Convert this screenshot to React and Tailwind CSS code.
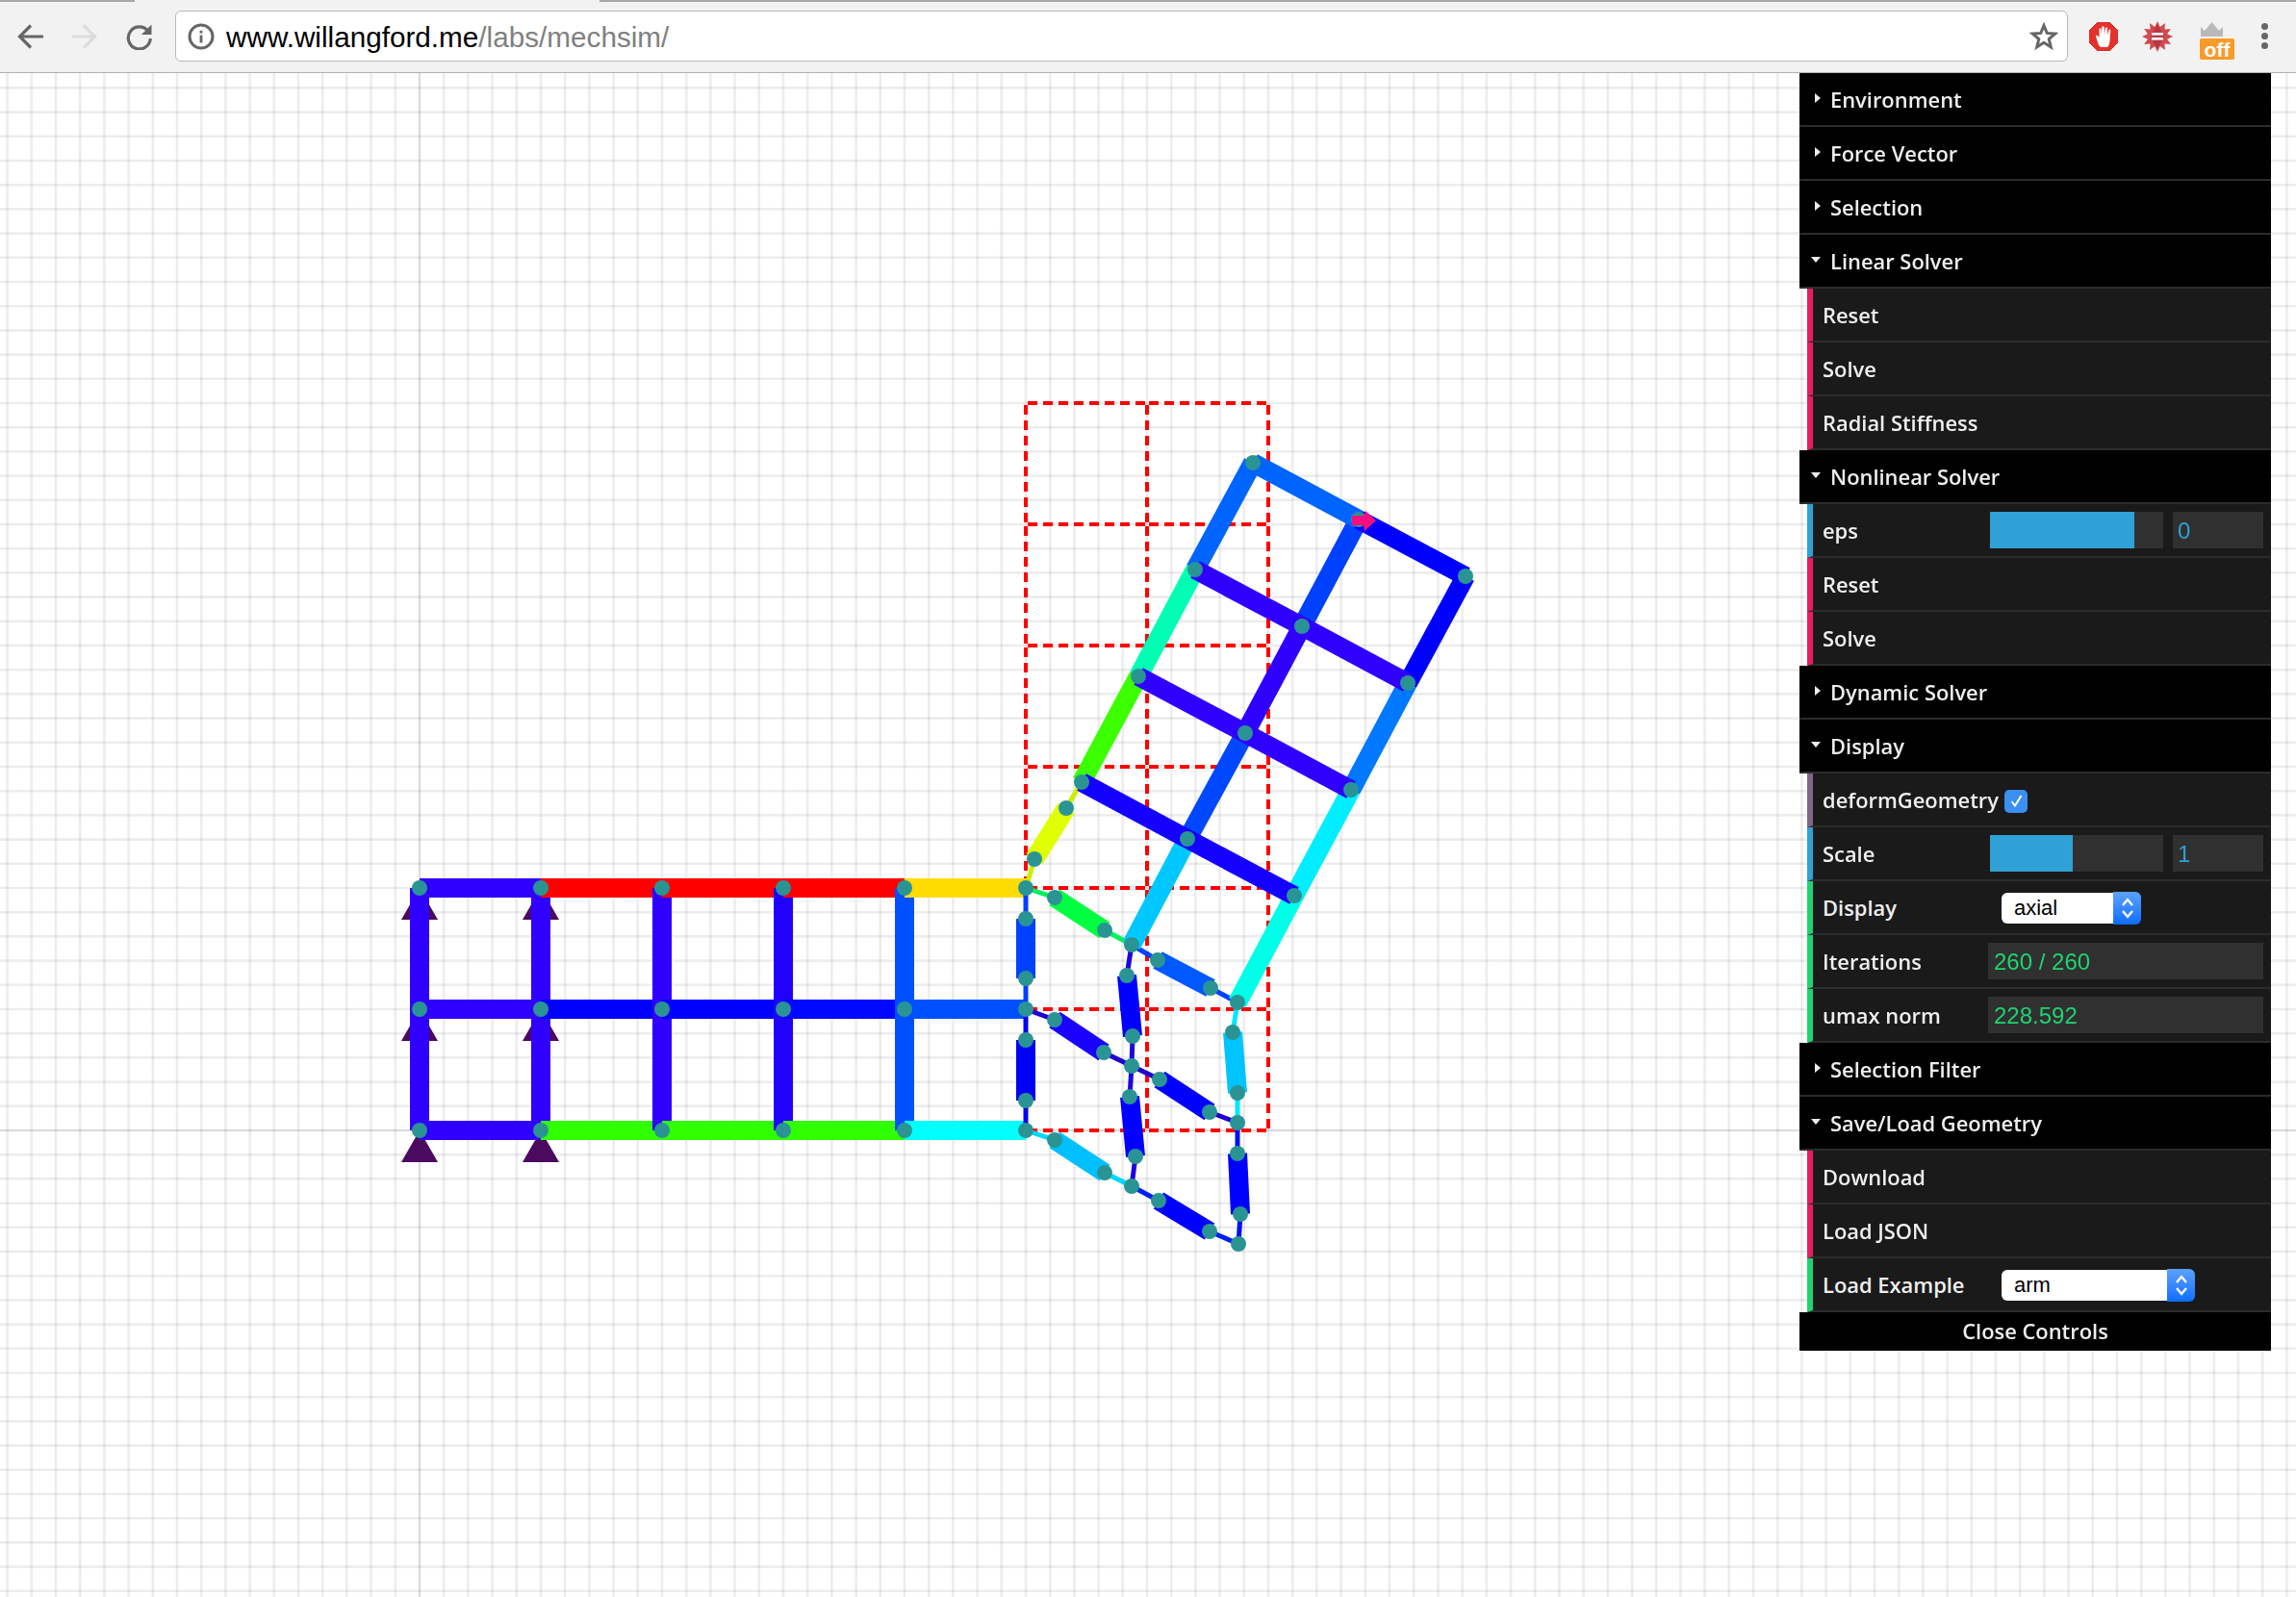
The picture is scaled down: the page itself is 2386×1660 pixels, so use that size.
import React from "react";

const gridX = Array.from({ length: 95 }, (_, i) => 436 + (i - 17) * 25.2);
const gridY = Array.from({ length: 63 }, (_, i) => 1175 + (i - 43) * 25.2);

const n = {
  a: [1302, 481], b: [1412, 540], c: [1523, 599],
  d: [1242, 592], e: [1353, 651], f: [1463, 710],
  g: [1183, 703], h: [1294, 762], i: [1404, 821],
  j: [1124, 813], k: [1234, 872], l: [1345, 931],
  m: [1176, 982], o: [1286, 1042], p: [1176, 1108], q: [1286, 1167],
  r: [1176, 1233], s: [1287, 1293],
  t: [1066, 923], u: [1066, 1049], v: [1066, 1175],
};

const xs = [436, 562, 688, 814, 940, 1066];
const ys = [923, 1049, 1175];
const rowColors = [
  ["#3000ff", "#ff0000", "#ff0000", "#ff0000", "#ffdc00"],
  ["#3000ff", "#0000ff", "#0000ff", "#0008ff", "#0050ff"],
  ["#3000ff", "#30ff00", "#30ff00", "#30ff00", "#00ffff"],
];
const colColors = ["#3000ff", "#3000ff", "#3000ff", "#2000ff", "#0050ff"];

const undeformed = [];
for (let c = 0; c < 5; c++) {
  undeformed.push({ x1: xs[c], y1: ys[0], x2: xs[c], y2: ys[1], color: colColors[c] });
  undeformed.push({ x1: xs[c], y1: ys[1], x2: xs[c], y2: ys[2], color: colColors[c] });
  ys.forEach((y, r) => undeformed.push({ x1: xs[c], y1: y, x2: xs[c + 1], y2: y, color: rowColors[r][c] }));
}

const thick = [
  [n.a, n.d, "#0064ff"], [n.d, n.g, "#00ffb4"], [n.g, n.j, "#3cff00"],
  [n.b, n.e, "#0040ff"], [n.e, n.h, "#3000ff"], [n.h, n.k, "#0048ff"], [n.k, n.m, "#00c8ff"],
  [n.c, n.f, "#0000ff"], [n.f, n.i, "#0078ff"], [n.i, n.l, "#00eeff"], [n.l, n.o, "#00ffe8"],
  [n.a, n.b, "#0064ff"], [n.b, n.c, "#0000ff"],
  [n.d, n.e, "#3000ff"], [n.e, n.f, "#3000ff"],
  [n.g, n.h, "#3000ff"], [n.h, n.i, "#3000ff"],
  [n.j, n.k, "#1400ff"], [n.k, n.l, "#1400ff"],
];

const chains = [
  [n.t, [1075, 893], [1108, 840], n.j, "#e0ff00", "#c8f000"],
  [n.t, [1066, 955], [1066, 1017], n.u, "#0040ff", "#0040ff"],
  [n.u, [1066, 1081], [1066, 1144], n.v, "#0000f4", "#0000f4"],
  [n.m, [1171, 1014], [1177, 1077], n.p, "#0000ff", "#2000e0"],
  [n.p, [1174, 1140], [1180, 1202], n.r, "#0000ff", "#2000e0"],
  [n.o, [1281, 1073], [1286, 1136], n.q, "#00c4ff", "#00e8ff"],
  [n.q, [1286, 1199], [1289, 1262], n.s, "#0000ff", "#0010f0"],
  [n.t, [1096, 933], [1148, 967], n.m, "#00ff40", "#00f060"],
  [n.m, [1203, 998], [1258, 1027], n.o, "#0058ff", "#0040ff"],
  [n.u, [1096, 1060], [1147, 1094], n.p, "#1a00ff", "#2000d0"],
  [n.p, [1205, 1122], [1257, 1156], n.q, "#0000ff", "#2000d0"],
  [n.v, [1096, 1185], [1148, 1219], n.r, "#00c0ff", "#00d8ff"],
  [n.r, [1204, 1248], [1257, 1280], n.s, "#0000ff", "#0020f0"],
];

const chainNodes = chains.flatMap((c) => [c[1], c[2]]);
const nodes = [...Object.values(n), ...chainNodes];
xs.slice(0, 5).forEach((x) => ys.forEach((y) => nodes.push([x, y])));

const dashes = [];
[1066, 1192, 1318].forEach((x) => {
  for (let y = 419; y < 1175; y += 126) dashes.push([x, y, x, y + 126]);
});
[419, 545, 671, 797, 923, 1049, 1175].forEach((y) => {
  for (let x = 1066; x < 1318; x += 126) dashes.push([x, y, x + 126, y]);
});

const supports = [];
[436, 562].forEach((x) => ys.forEach((y) => supports.push(`${x},${y} ${x - 19},${y + 33} ${x + 19},${y + 33}`)));

function Seg({ a, b, w, color }) {
  return <line x1={a[0]} y1={a[1]} x2={b[0]} y2={b[1]} stroke={color} strokeWidth={w} />;
}

function Canvas() {
  return (
    <svg className="block h-[1584px] w-[2386px] blur-[0.6px]" viewBox="0 76 2386 1584">
      <rect x="0" y="76" width="2386" height="1584" fill="#ffffff" />
      <g stroke="#000000" strokeOpacity="0.07" strokeWidth="2.6">
        {gridX.map((x) => <line key={x} x1={x} y1="76" x2={x} y2="1660" />)}
        {gridY.map((y) => <line key={y} x1="0" y1={y} x2="2386" y2={y} />)}
      </g>
      <g stroke="#000000" strokeOpacity="0.1" strokeWidth="1.5">
        <line x1="436" y1="76" x2="436" y2="1660" />
        <line x1="0" y1="1175" x2="2386" y2="1175" />
      </g>
      <g fill="#4a0a60">
        {supports.map((p) => <polygon key={p} points={p} />)}
      </g>
      <g stroke="#ff0000" strokeWidth="4" strokeDasharray="10 6" strokeDashoffset="-2" fill="none">
        {dashes.map((d) => <line key={d.join()} x1={d[0]} y1={d[1]} x2={d[2]} y2={d[3]} />)}
      </g>
      {undeformed.map((s, i) => (
        <line key={i} x1={s.x1} y1={s.y1} x2={s.x2} y2={s.y2} stroke={s.color} strokeWidth="20" />
      ))}
      {chains.map((c, i) => (
        <g key={i}>
          <Seg a={c[0]} b={c[1]} w={5} color={c[5]} />
          <Seg a={c[2]} b={c[3]} w={5} color={c[5]} />
          <Seg a={c[1]} b={c[2]} w={20} color={c[4]} />
        </g>
      ))}
      {thick.map((t, i) => <Seg key={i} a={t[0]} b={t[1]} w={20} color={t[2]} />)}
      <g fill="#2a9494">
        {nodes.map((p, i) => <circle key={i} cx={p[0]} cy={p[1]} r="8" />)}
      </g>
      <polygon points="1405,536 1418,536 1419,531 1430,541 1418,552 1417,546 1405,546" fill="#ff0d80" />
    </svg>
  );
}

function Reload() {
  return (
    <svg width="28" height="28" viewBox="0 0 28 28" fill="none">
      <path d="M23 8.5A11.5 11.5 0 1 0 25.3 16" stroke="#666" strokeWidth="3.2" />
      <polygon points="26.5,1.5 26.5,12 16,12" fill="#666" />
    </svg>
  );
}

function Info() {
  return (
    <svg width="28" height="28" viewBox="0 0 28 28" fill="none">
      <circle cx="14" cy="14" r="12" stroke="#666" strokeWidth="3" />
      <rect x="12.6" y="12.5" width="2.8" height="8" fill="#666" />
      <rect x="12.6" y="7.8" width="2.8" height="2.8" fill="#666" />
    </svg>
  );
}

function StarIcon() {
  return (
    <svg width="30" height="30" viewBox="0 0 30 30" fill="none">
      <polygon
        points="15,3.5 18.2,11.4 26.8,12 20.2,17.5 22.3,25.9 15,21.3 7.7,25.9 9.8,17.5 3.2,12 11.8,11.4"
        stroke="#666666"
        strokeWidth="3"
        strokeLinejoin="miter"
      />
    </svg>
  );
}

function Adblock() {
  return (
    <svg width="30" height="30" viewBox="0 0 30 30">
      <polygon points="9,0 21,0 30,9 30,21 21,30 9,30 0,21 0,9" fill="#e5312c" stroke="#d62a26" strokeLinejoin="round" />
      <path d="M10 24 L7 15 Q7 13 9 14 L10.5 16 L10.5 7 Q11.5 5.5 12.5 7 L13 13 L13.3 5 Q14.5 3.5 15.7 5 L16 13 L17 6 Q18 4.7 19 6 L18.8 13.5 L20.5 8 Q21.7 7 22.3 8.5 L21.5 20 Q21 24 19 26 L12 26 Z" fill="#ffffff" />
    </svg>
  );
}

function Wolfram() {
  const pts = Array.from({ length: 24 }, (_, i) => {
    const r = i % 2 === 0 ? 16 : 10.5;
    const t = (i * Math.PI) / 12 - Math.PI / 2;
    return `${(16 + r * Math.cos(t)).toFixed(1)},${(16 + r * Math.sin(t)).toFixed(1)}`;
  }).join(" ");
  return (
    <svg width="32" height="32" viewBox="0 0 32 32">
      <polygon points={pts} fill="#d14a50" />
      <polygon points="16,3 23,16 16,29 9,16" fill="#a92b35" opacity="0.6" />
      <rect x="10" y="12" width="12" height="2.6" fill="#ffffff" />
      <rect x="10" y="17" width="12" height="2.6" fill="#ffffff" />
    </svg>
  );
}

function OffExt() {
  return (
    <div className="mt-[10px] flex h-[39px] w-[36px] flex-col">
      <svg className="ml-[1px]" width="23" height="15" viewBox="0 0 23 15">
        <polygon points="0,5 4,9 11.5,0 19,9 23,5 23,15 0,15" fill="#b8b8b8" />
      </svg>
      <div className="mt-[2px] flex h-[22px] w-[36px] shrink-0 items-center justify-center rounded-[2px] bg-[#fa9a28] font-['Liberation_Sans',sans-serif] text-[21px] leading-none font-bold text-white">
        off
      </div>
    </div>
  );
}

function Toolbar() {
  return (
    <div className="relative flex h-[76px] items-center border-b border-[#b0b0b0] bg-[#f2f2f2] pl-[18px]">
      <div className="absolute top-0 left-0 h-[2px] w-[140px] bg-[#a8a8a8]" />
      <div className="absolute top-0 right-0 left-[623px] h-[2px] bg-[#a8a8a8]" />
      <svg width="27" height="28" viewBox="0 0 27 28" fill="none" stroke="#666" strokeWidth="3.2">
        <path d="M27 14H3M14 2.5L2.5 14L14 25.5" />
      </svg>
      <svg className="ml-[30px]" width="26" height="28" viewBox="0 0 26 28" fill="none" stroke="#dcdcdc" strokeWidth="3.2">
        <path d="M0 14H23M12 2.5L23.5 14L12 25.5" />
      </svg>
      <div className="ml-[30px] flex">
        <Reload />
      </div>
      <div className="ml-[23px] flex h-[53px] w-[1967px] items-center rounded-[6px] border border-[#b8b8b8] bg-white pr-[9px] pl-[12px]">
        <Info />
        <div className="ml-[12px] flex-1 pt-[2px] font-['Liberation_Sans',sans-serif] text-[29.7px] leading-none whitespace-nowrap text-black">
          www.willangford.me<span className="text-[#808080]">/labs/mechsim/</span>
        </div>
        <StarIcon />
      </div>
      <div className="ml-[22px] flex"><Adblock /></div>
      <div className="ml-[25px] flex"><Wolfram /></div>
      <div className="ml-[28px] flex"><OffExt /></div>
      <div className="ml-[28px] flex flex-col gap-[3px]">
        <div className="size-[7px] rounded-full bg-[#666666]" />
        <div className="size-[7px] rounded-full bg-[#666666]" />
        <div className="size-[7px] rounded-full bg-[#666666]" />
      </div>
    </div>
  );
}

const FONT = "font-['Open_Sans',sans-serif] text-[21.9px] font-semibold text-[#eeeeee] leading-none whitespace-nowrap";

function Folder({ open, children }) {
  return (
    <div className={`flex h-[56px] items-center border-b-2 border-[#2c2c2c] bg-black ${FONT}`}>
      <div className="flex w-[32px] shrink-0 justify-end pr-[10px] pb-[3px]">
        {open ? (
          <svg width="10" height="6" viewBox="0 0 10 6"><polygon points="0,0 10,0 5,6" fill="#eeeeee" /></svg>
        ) : (
          <svg width="6" height="10" viewBox="0 0 6 10"><polygon points="0,0 6,5 0,10" fill="#eeeeee" /></svg>
        )}
      </div>
      <span className="block pt-[2px]">{children}</span>
    </div>
  );
}

function Row({ border, label, children }) {
  return (
    <div className={`ml-[8px] flex h-[56px] items-center border-b-2 border-l-[6px] border-b-[#2c2c2c] bg-[#1a1a1a] pl-[10px] ${border} ${FONT}`}>
      <span className="block pt-[2px]">{label}</span>
      {children}
    </div>
  );
}

function Slider({ fill, value }) {
  return (
    <div className="ml-auto flex items-center gap-[10px] pr-[8px]">
      <div className="h-[38px] w-[180px] bg-[#303030]">
        <div className="h-full bg-[#2fa1d6]" style={{ width: fill }} />
      </div>
      <div className="flex h-[38px] w-[94px] items-center bg-[#303030] pt-[2px] pl-[5px] font-['Liberation_Sans',sans-serif] text-[24px] font-normal text-[#2fa1d6]">
        {value}
      </div>
    </div>
  );
}

function Select({ width, value }) {
  return (
    <div className="absolute left-[210px] mt-[1px] flex h-[34px] items-center" style={{ width }}>
      <div className="flex h-[32px] flex-1 items-center rounded-l-[6px] bg-white pt-[1px] pl-[13px] font-['Liberation_Sans',sans-serif] text-[22px] font-normal text-black">
        {value}
      </div>
      <div className="flex h-[34px] w-[29px] items-center justify-center rounded-r-[6px] bg-gradient-to-b from-[#5aa2ff] to-[#0a6cff]">
        <svg width="14" height="24" viewBox="0 0 14 24" fill="none" stroke="#ffffff" strokeWidth="2.4">
          <path d="M2 9L7 3L12 9M2 15L7 21L12 15" />
        </svg>
      </div>
    </div>
  );
}

function ValueBox({ value }) {
  return (
    <div className="mr-[8px] ml-auto flex h-[38px] w-[286px] items-center bg-[#303030] pt-[2px] pl-[6px] font-['Liberation_Sans',sans-serif] text-[24px] font-normal text-[#1ed36f]">
      {value}
    </div>
  );
}

const FN = "border-l-[#e61d5f]";
const NUM = "border-l-[#2fa1d6]";
const STR = "border-l-[#1ed36f]";
const BOOL = "border-l-[#806787]";

function Panel() {
  return (
    <div className="absolute top-[76px] left-[1870px] w-[490px] blur-[0.3px]">
      <Folder>Environment</Folder>
      <Folder>Force Vector</Folder>
      <Folder>Selection</Folder>
      <Folder open>Linear Solver</Folder>
      <Row border={FN} label="Reset" />
      <Row border={FN} label="Solve" />
      <Row border={FN} label="Radial Stiffness" />
      <Folder open>Nonlinear Solver</Folder>
      <Row border={NUM} label="eps"><Slider fill="150px" value="0" /></Row>
      <Row border={FN} label="Reset" />
      <Row border={FN} label="Solve" />
      <Folder>Dynamic Solver</Folder>
      <Folder open>Display</Folder>
      <Row border={BOOL} label="deformGeometry">
        <div className="mt-[3px] ml-[6px] flex size-[24px] items-center justify-center rounded-[5px] bg-[#3a8ff0]">
          <svg width="15" height="15" viewBox="0 0 15 15" fill="none" stroke="#ffffff" strokeWidth="2">
            <path d="M2.5 8L6 12.5L12.5 2" />
          </svg>
        </div>
      </Row>
      <Row border={NUM} label="Scale"><Slider fill="86px" value="1" /></Row>
      <div className="relative"><Row border={STR} label="Display"><Select width="145px" value="axial" /></Row></div>
      <Row border={STR} label="Iterations"><ValueBox value="260 / 260" /></Row>
      <Row border={STR} label="umax norm"><ValueBox value="228.592" /></Row>
      <Folder>Selection Filter</Folder>
      <Folder open>Save/Load Geometry</Folder>
      <Row border={FN} label="Download" />
      <Row border={FN} label="Load JSON" />
      <div className="relative"><Row border={STR} label="Load Example"><Select width="201px" value="arm" /></Row></div>
      <div className={`flex h-[40px] items-center justify-center bg-black ${FONT}`}>Close Controls</div>
    </div>
  );
}

export default function App() {
  return (
    <div className="relative h-[1660px] w-[2386px] overflow-hidden bg-white">
      <Toolbar />
      <Canvas />
      <Panel />
    </div>
  );
}
